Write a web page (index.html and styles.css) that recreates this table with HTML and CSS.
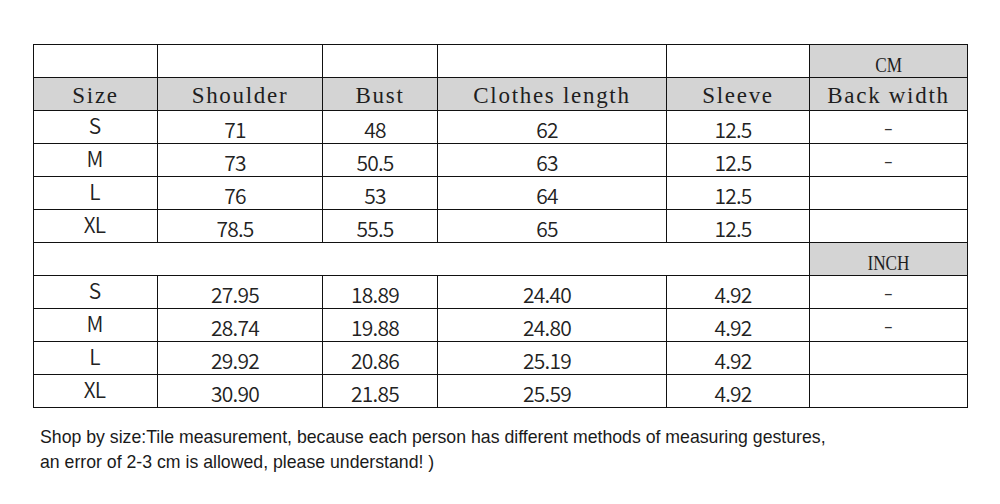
FILE: index.html
```html
<!DOCTYPE html>
<html>
<head>
<meta charset="utf-8">
<link rel="stylesheet" href="styles.css">
</head>
<body>
<div class="page">
  <table class="sizes">
    <colgroup>
      <col class="c1"><col class="c2"><col class="c3"><col class="c4"><col class="c5"><col class="c6">
    </colgroup>
    <tr>
      <td></td><td></td><td></td><td></td><td></td><td class="gray unit"><span class="unit-t">CM</span></td>
    </tr>
    <tr class="head">
      <td>Size</td>
      <td>Shoulder</td>
      <td>Bust</td>
      <td>Clothes length</td>
      <td>Sleeve</td>
      <td>Back width</td>
    </tr>
    <tr class="data"><td class="sz">S</td><td>71</td><td>48</td><td>62</td><td>12.5</td><td class="dash"><span class="dash-t">-</span></td></tr>
    <tr class="data"><td class="sz">M</td><td>73</td><td>50.5</td><td>63</td><td>12.5</td><td class="dash"><span class="dash-t">-</span></td></tr>
    <tr class="data"><td class="sz">L</td><td>76</td><td>53</td><td>64</td><td>12.5</td><td></td></tr>
    <tr class="data"><td class="sz">XL</td><td>78.5</td><td>55.5</td><td>65</td><td>12.5</td><td></td></tr>
    <tr>
      <td colspan="5"></td><td class="gray unit"><span class="unit-t">INCH</span></td>
    </tr>
    <tr class="data"><td class="sz">S</td><td>27.95</td><td>18.89</td><td>24.40</td><td>4.92</td><td class="dash"><span class="dash-t">-</span></td></tr>
    <tr class="data"><td class="sz">M</td><td>28.74</td><td>19.88</td><td>24.80</td><td>4.92</td><td class="dash"><span class="dash-t">-</span></td></tr>
    <tr class="data"><td class="sz">L</td><td>29.92</td><td>20.86</td><td>25.19</td><td>4.92</td><td></td></tr>
    <tr class="data"><td class="sz">XL</td><td>30.90</td><td>21.85</td><td>25.59</td><td>4.92</td><td></td></tr>
  </table>
  <p class="note">Shop by size:Tile measurement, because each person has different methods of measuring gestures,<br>an error of 2-3 cm is allowed, please understand! )</p>
</div>
</body>
</html>
```

FILE: styles.css
```css
html, body {
  margin: 0;
  padding: 0;
  background: #ffffff;
}

.page {
  padding: 44px 0 0 33px;
}

.sizes {
  border-collapse: collapse;
  table-layout: fixed;
  width: 934px;
  font-family: "Noto Sans CJK SC", "Noto Sans", sans-serif;
  font-size: 21px;
  font-weight: 350;
  letter-spacing: -0.8px;
  color: #222222;
}

.c1 { width: 124px; }
.c2 { width: 165px; }
.c3 { width: 115px; }
.c4 { width: 229px; }
.c5 { width: 143px; }
.c6 { width: 158px; }

.sizes td {
  box-sizing: border-box;
  height: 33px;
  border: 1px solid #111111;
  padding: 5px 0 0 0;
  text-align: center;
  vertical-align: top;
  line-height: 26px;
  white-space: nowrap;
  overflow: hidden;
}

.data td {
  padding-right: 10px;
}

.data td.sz {
  padding-top: 1px;
  padding-right: 2px;
}

.head td,
.gray {
  background: #d4d4d4;
}

.head td {
  font-family: "Liberation Serif", "Times New Roman", serif;
  font-size: 23px;
  font-weight: 400;
  letter-spacing: 1.7px;
  color: #1e1e1e;
}

.sizes td.unit {
  padding-top: 6px;
  line-height: 24px;
}

.unit-t {
  display: inline-block;
  font-family: "Liberation Serif", "Times New Roman", serif;
  font-size: 20px;
  font-weight: 400;
  letter-spacing: 0;
  color: #1e1e1e;
  transform: scaleX(0.86);
}

.data td.dash {
  padding-right: 0;
  font-family: "Liberation Serif", "Times New Roman", serif;
  font-size: 20px;
  font-weight: 400;
  letter-spacing: 0;
  color: #333333;
}

.dash-t {
  display: inline-block;
  transform: translateY(-1px) scale(1.3, 0.8);
}

.note {
  margin: 17px 0 0 7px;
  font-family: "Liberation Sans", Arial, sans-serif;
  font-size: 17.7px;
  line-height: 25px;
  color: #1a1a1a;
}
```
